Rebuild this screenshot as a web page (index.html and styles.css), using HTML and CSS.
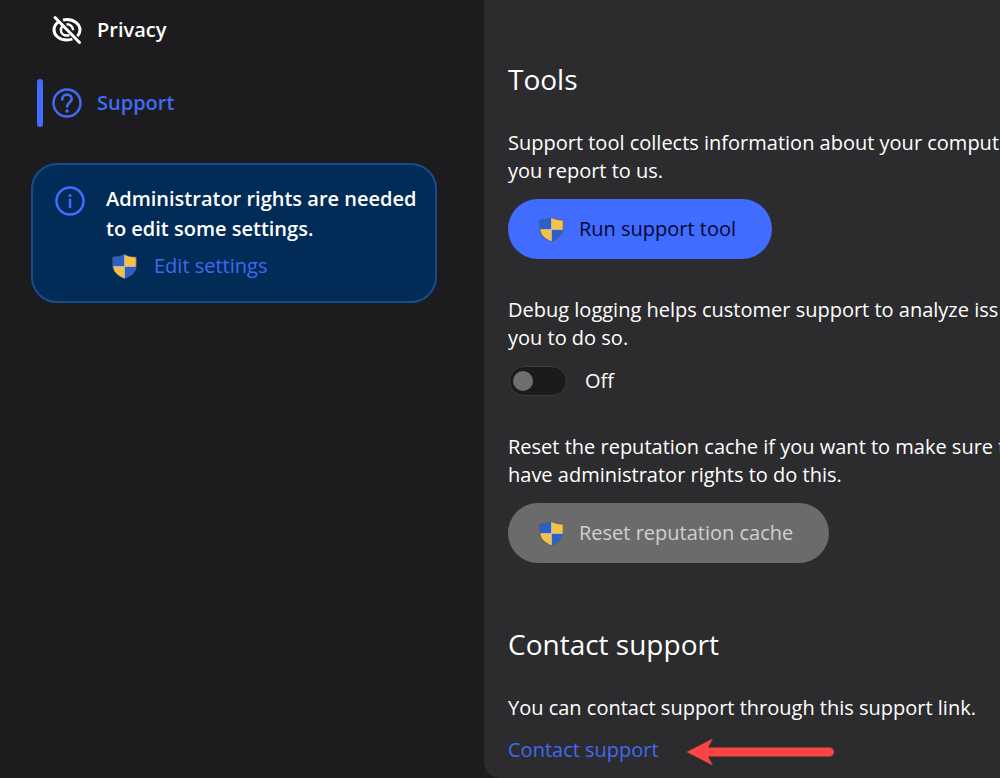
FILE: index.html
```html
<!DOCTYPE html>
<html lang="en">
<head>
<meta charset="utf-8">
<meta name="viewport" content="width=device-width, initial-scale=1">
<title>Support</title>
<link rel="stylesheet" href="styles.css">
</head>
<body>
<svg class="defs" aria-hidden="true">
  <symbol id="shield" viewBox="0 0 26 26">
    <path d="M13 0.5C9.5 2.3 5 3.2 0.8 3.2V12C0.8 18.500 6 23 13 25.600Z" fill="#2f5fc4"/>
    <path d="M13 0.500C16.500 2.300 21 3.200 25.200 3.200V12C25.200 18.500 20 23 13 25.600Z" fill="#f6c244"/>
    <path d="M0.900 13H13V25.600C6.500 23.200 1.500 19 0.900 13Z" fill="#f6c244"/>
    <path d="M25.100 13H13V25.600C19.500 23.200 24.500 19 25.100 13Z" fill="#2f5fc4"/>
    <path d="M13 1V25M1 13H25" stroke="#b9c2cc" stroke-width="0.800" fill="none"/>
    <path d="M13 0.500C9.500 2.300 5 3.200 0.800 3.200V12C0.800 18.500 6 23 13 25.600C20 23 25.200 18.500 25.200 12V3.200C21 3.200 16.500 2.300 13 0.500Z" fill="none" stroke="#4c5874" stroke-width="0.800"/>
  </symbol>
</svg>
<div class="app">
  <aside class="sidebar">
    <nav class="nav">
      <a class="nav-item" href="#privacy">
        <svg class="nav-icon" viewBox="0 0 30 30" fill="none" stroke="currentColor" stroke-width="3" aria-hidden="true">
          <path d="M7.500 6.300C4 8.200 2 11.500 2 15C2 20.600 7.800 25 15 25C17 25 18.800 24.700 20.300 24"/>
          <path d="M11 5C12.300 4.700 13.700 4.600 15 4.600C22.200 4.600 28 9.300 28 15C28 17.300 27 19.400 25.300 21.100"/>
          <path d="M10.200 11.200C9.300 12.300 8.900 13.500 8.900 15C8.900 18.300 11.600 20.600 15 20.600C15.900 20.600 16.700 20.400 17.400 20.100" stroke-width="2.500"/>
          <path d="M14.500 9.200C18.200 9 21.100 11.700 21.100 15.200" stroke-width="2.500"/>
          <path d="M3 2.500L27.500 27.500" stroke-linecap="round" stroke-width="3"/>
        </svg>
        <span>Privacy</span>
      </a>
      <a class="nav-item nav-item-active" href="#support" aria-current="page">
        <svg class="nav-icon" viewBox="0 0 30 30" fill="none" stroke="currentColor" stroke-width="2.500" stroke-linecap="round" aria-hidden="true">
          <circle cx="15" cy="15" r="13.500"/>
          <path d="M10.300 11.300C10.300 8.500 12.300 6.700 15 6.700C17.700 6.700 19.700 8.500 19.700 11C19.700 14.200 15.100 14.700 15.100 18.500" stroke-width="2.700"/>
          <circle cx="15.100" cy="23" r="1.800" fill="currentColor" stroke="none"/>
        </svg>
        <span>Support</span>
      </a>
    </nav>
    <section class="notice">
      <svg class="notice-icon" viewBox="0 0 30 30" fill="none" stroke="currentColor" stroke-width="2.500" stroke-linecap="round" aria-hidden="true">
        <circle cx="15" cy="15" r="13.500"/>
        <path d="M15 13.800V21"/>
        <circle cx="15" cy="9.500" r="1.500" fill="currentColor" stroke="none"/>
      </svg>
      <div>
        <p class="notice-text">Administrator rights are needed<br>to edit some settings.</p>
        <a class="notice-link" href="#edit">
          <svg class="shield" aria-hidden="true"><use href="#shield"/></svg>
          <span>Edit settings</span>
        </a>
      </div>
    </section>
  </aside>
  <main class="content">
    <section class="section">
      <h2 class="title">Tools</h2>
      <div class="group">
        <p class="text">Support tool collects information about your comput<br>you report to us.</p>
        <button class="button button-primary" type="button">
          <svg class="shield" aria-hidden="true"><use href="#shield"/></svg>
          <span>Run support tool</span>
        </button>
      </div>
      <div class="group">
        <p class="text">Debug logging helps customer support to analyze iss<br>you to do so.</p>
        <label class="toggle">
          <input class="switch" type="checkbox" role="switch">
          <span>Off</span>
        </label>
      </div>
      <div class="group">
        <p class="text">Reset the reputation cache if you want to make sure t<br>have administrator rights to do this.</p>
        <button class="button" type="button" disabled>
          <svg class="shield" aria-hidden="true"><use href="#shield"/></svg>
          <span>Reset reputation cache</span>
        </button>
      </div>
    </section>
    <section class="section">
      <h2 class="title">Contact support</h2>
      <div class="group">
        <p class="text">You can contact support through this support link.</p>
        <div class="link-row">
          <a class="link" href="#contact">Contact support</a>
          <svg class="arrow" viewBox="0 0 150 28" aria-hidden="true">
            <path d="M0.500 14L27 0.500L22 9.500H143.500A4.500 4.500 0 0 1 143.500 18.500H22L27 27.500Z" fill="#fb4444"/>
          </svg>
        </div>
      </div>
    </section>
  </main>
</div>
</body>
</html>
```
FILE: styles.css
```css
* {
  box-sizing: border-box;
}

body {
  margin: 0;
  background: #1c1c1e;
  color: #fff;
  font: 20px/28px "Open Sans", "Noto Sans", sans-serif;
}

.defs {
  display: none;
}

.app {
  display: flex;
  min-height: 100vh;
}

.sidebar {
  flex: 0 0 484px;
  padding: 6px 47px 24px 31px;
}

.nav {
  display: grid;
  gap: 25px;
  padding-left: 6px;
}

.nav-item {
  display: flex;
  align-items: center;
  gap: 15px;
  height: 48px;
  padding-left: 15px;
  color: #fff;
  font-weight: 600;
  text-decoration: none;
  position: relative;
}

.nav-item-active {
  color: #3f6bf7;
}

.nav-item-active::before {
  content: "";
  position: absolute;
  left: 0;
  top: 0;
  width: 6px;
  height: 48px;
  border-radius: 3px;
  background: #406cff;
}

.nav-icon,
.notice-icon {
  flex: none;
  width: 30px;
  height: 30px;
}

.notice {
  display: flex;
  gap: 21px;
  margin-top: 36px;
  padding: 19px 16px 21px 22px;
  border: 2px solid #164d8a;
  border-radius: 26px;
  background: #002c57;
}

.notice-icon {
  margin-top: 2px;
  color: #406cff;
}

.notice-text {
  margin: 0;
  font-weight: 600;
  line-height: 30px;
  white-space: nowrap;
}

.notice-link {
  display: flex;
  align-items: center;
  gap: 17px;
  margin-top: 8px;
  padding-left: 6px;
  color: #4169f0;
  text-decoration: none;
}

.shield {
  flex: none;
  width: 25px;
  height: 25px;
}

.content {
  flex: 1;
  min-width: 0;
  overflow: hidden;
  padding: 59px 0 12px 24px;
  border-radius: 0 0 0 16px;
  background: #2c2c2e;
}

.section + .section {
  margin-top: 61px;
}

.title {
  margin: 0 0 30px;
  font-size: 28px;
  font-weight: 400;
  line-height: 40px;
}

.group + .group {
  margin-top: 37px;
}

.text {
  margin: 0 0 14px;
  white-space: nowrap;
}

.button {
  display: flex;
  align-items: center;
  gap: 15px;
  height: 60px;
  padding: 0 36px 0 31px;
  border: 0;
  border-radius: 30px;
  background: #6b6b6b;
  color: #d0d0d0;
  font: inherit;
}

.button-primary {
  background: #406cff;
  color: #04082c;
}

.toggle {
  display: flex;
  align-items: center;
  gap: 18px;
  width: max-content;
}

.switch {
  appearance: none;
  display: flex;
  align-items: center;
  width: 58px;
  height: 30px;
  margin: 0 0 0 1px;
  padding-left: 3px;
  border: 1px solid #3d3d3f;
  border-radius: 15px;
  background: #1b1b1d;
}

.switch::before {
  content: "";
  width: 20px;
  height: 20px;
  border-radius: 50%;
  background: #6f6f6f;
}

.switch:checked {
  justify-content: flex-end;
  padding: 0 3px 0 0;
}

.link-row {
  display: flex;
  align-items: flex-start;
  gap: 27px;
}

.link {
  color: #4169f0;
  text-decoration: none;
}

.arrow {
  width: 150px;
  height: 28px;
  margin-top: 2px;
}
```
